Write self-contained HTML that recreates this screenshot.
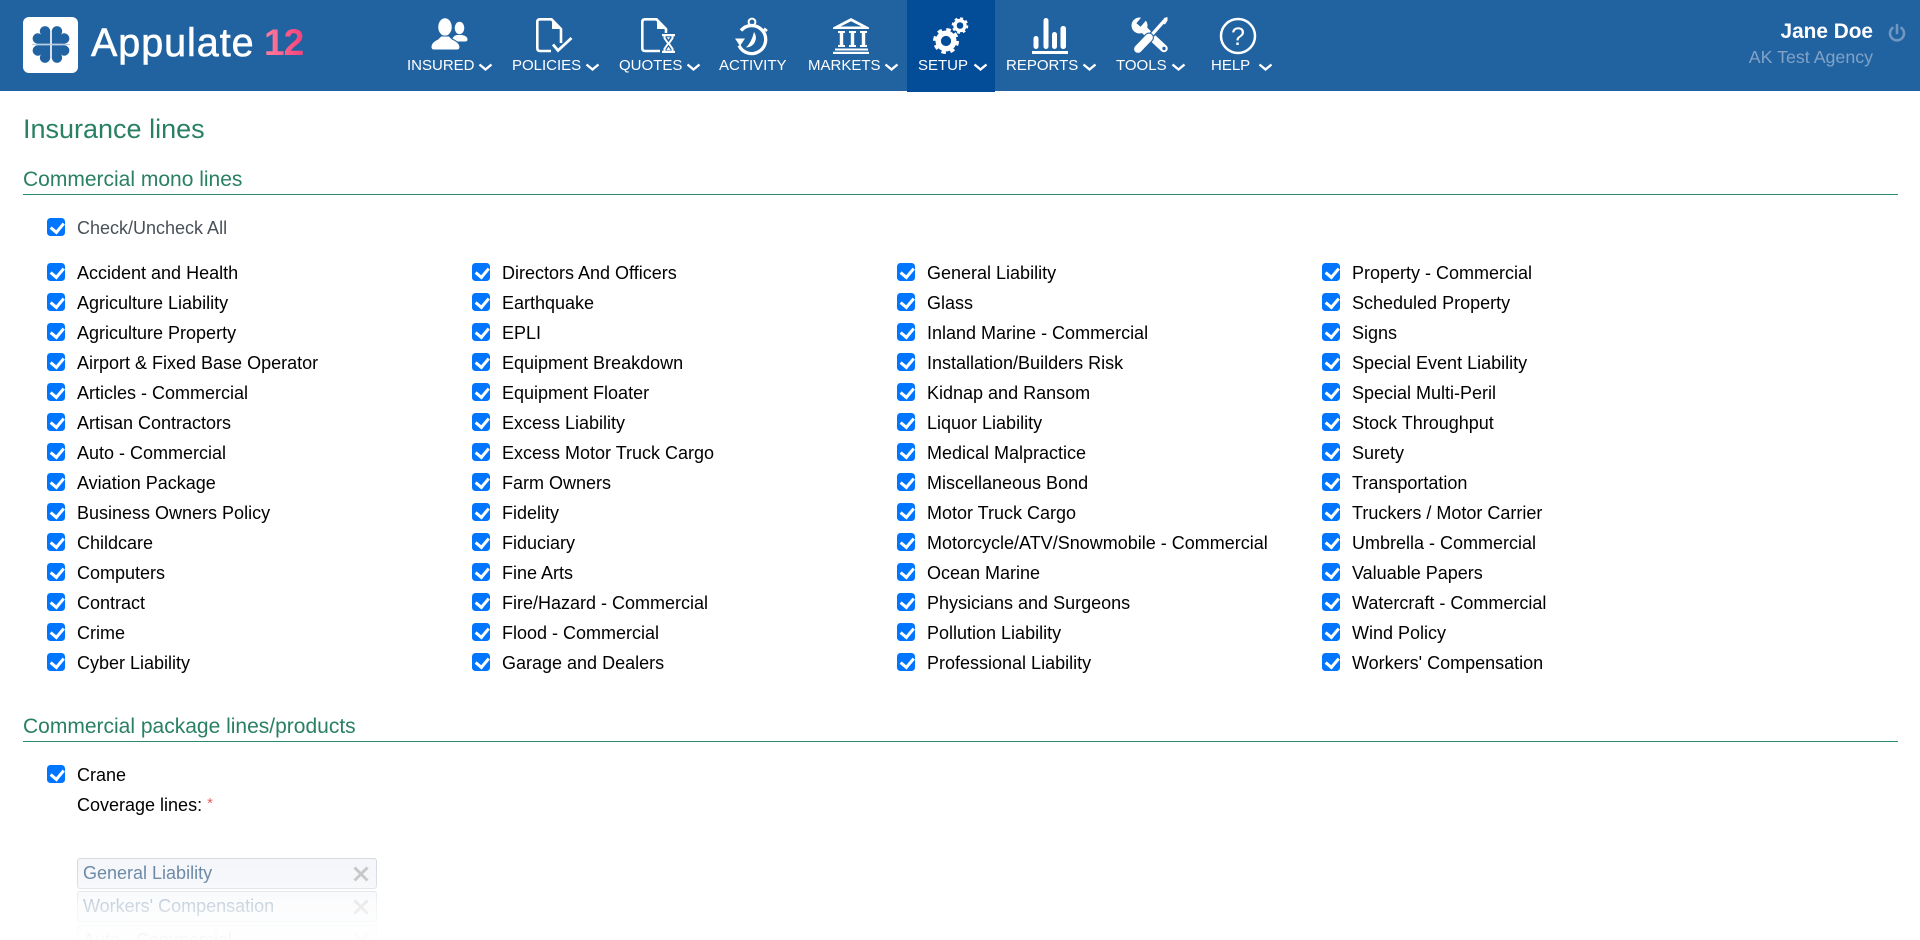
<!DOCTYPE html>
<html lang="en"><head><meta charset="utf-8"><title>Insurance lines</title>
<style>
*{box-sizing:border-box}
html,body{margin:0;padding:0;width:1920px;height:940px;overflow:hidden;background:#fff;font-family:"Liberation Sans",Arial,sans-serif;color:#000}
#w{position:relative;width:1920px;height:940px;overflow:hidden}
.hd{position:absolute;left:0;top:0;width:1920px;height:91px;background:#2163a1}
.act{position:absolute;left:907px;top:0;width:88px;height:92px;background:#034c98}
.ic{position:absolute;left:0;top:0;width:1920px;height:92px}
.nl{position:absolute;top:57px;font-size:15px;line-height:18px;color:#fff;white-space:nowrap}
.brand{position:absolute;left:91px;top:21px;font-size:39.5px;line-height:44px;color:#fff;letter-spacing:.95px;-webkit-text-stroke:.6px #fff;white-space:nowrap}
.n12{position:absolute;left:264px;top:21px;font-size:37px;line-height:44px;font-weight:bold;letter-spacing:-1px;background:linear-gradient(90deg,#ff7f9d,#f6437a);-webkit-background-clip:text;background-clip:text;color:transparent}
.u1{position:absolute;right:47px;top:20px;font-size:20.8px;line-height:24px;font-weight:bold;color:#fff;white-space:nowrap}
.u2{position:absolute;right:47px;top:46px;font-size:17.8px;line-height:22px;color:#82a3c7;white-space:nowrap}
h1{position:absolute;left:23px;top:112px;margin:0;font-size:27px;line-height:34px;font-weight:normal;color:#2a8064}
h2{position:absolute;left:23px;margin:0;width:1875px;font-size:21px;line-height:26px;font-weight:normal;color:#2a8064;border-bottom:1.5px solid #2a8a6c;height:28px}
.cb{position:absolute;display:block;height:30px;line-height:32px;font-size:18px;white-space:nowrap;padding-left:30px}
.cb input{position:absolute;left:0;top:6px;width:18px;height:18px;margin:0;appearance:none;-webkit-appearance:none;background:#0075ff;border-radius:3.5px}
.cb input::after{content:"";position:absolute;left:5.6px;top:2px;width:5.5px;height:9.5px;border:solid #fff;border-width:0 3px 3px 0;transform:rotate(40deg)}
.col{position:absolute;top:257px;width:420px}
.col .cb{position:relative}
.tag{position:absolute;left:77px;width:300px;height:31px;border:1px solid #d5d9e0;border-radius:3px;background:#f4f6f9;color:#5f7f9f;font-size:18px;line-height:29px;padding-left:5px;white-space:nowrap;overflow:hidden}
.x{position:absolute;right:7px;top:7px;width:16px;height:16px}
.fade{position:absolute;left:70px;top:855px;width:320px;height:85px;background:linear-gradient(180deg,rgba(255,255,255,0) 0,rgba(255,255,255,.12) 30%,rgba(255,255,255,.65) 55%,rgba(255,255,255,.97) 100%)}
</style></head><body><div id="w">
<div class="hd"></div><div class="act"></div>

<svg class="ic" viewBox="0 0 1920 92" fill="#fff">
<!-- logo -->
<rect x="23" y="17" width="55" height="56" rx="6"/>
<g fill="#2163a1" transform="translate(51 44.5)">
<g><circle cx="-6" cy="-13.200" r="5.200"/><circle cx="-13.200" cy="-6" r="5.200"/><path d="M-.8-.8V-13.200L-9.700-9.700-13.200-.8Z"/></g>
<g transform="scale(-1 1)"><circle cx="-6" cy="-13.200" r="5.200"/><circle cx="-13.200" cy="-6" r="5.200"/><path d="M-.8-.8V-13.200L-9.700-9.700-13.200-.8Z"/></g>
<g transform="scale(1 -1)"><circle cx="-6" cy="-13.200" r="5.200"/><circle cx="-13.200" cy="-6" r="5.200"/><path d="M-.8-.8V-13.200L-9.700-9.700-13.200-.8Z"/></g>
<g transform="scale(-1 -1)"><circle cx="-6" cy="-13.200" r="5.200"/><circle cx="-13.200" cy="-6" r="5.200"/><path d="M-.8-.8V-13.200L-9.700-9.700-13.200-.8Z"/></g>
</g>
<rect x="32" y="43.900" width="38" height="1.200" fill="#b9cde0"/>
<!-- insured -->
<ellipse cx="459.500" cy="28" rx="4.800" ry="6.200"/>
<path d="M452 41.500Q452 36 457 35H462Q467.500 36 467.500 39.500Q467.500 41.500 465 41.500Z"/>
<ellipse cx="445" cy="27" rx="7.500" ry="9.500" stroke="#2163a1" stroke-width="1.500"/>
<path d="M431 47Q431 42 438 39L441 36H449L452 39Q459.500 42 460 47Q460 50 457 50H434Q431 50 431 47Z" stroke="#2163a1" stroke-width="1"/>
<!-- policies -->
<g fill="none" stroke="#fff" stroke-width="2.600">
<path d="M551 51H540Q537.300 51 537.300 48V22Q537.300 19.300 540 19.300H551.500L561 29V43"/>
<path d="M553 44.500L558 50.500L571.500 38" stroke-width="2.800"/>
</g>
<path d="M552 20V29H560.500Z"/>
<!-- quotes -->
<g fill="none" stroke="#fff" stroke-width="2.600">
<path d="M660 51H645Q642.300 51 642.300 48V22Q642.300 19.300 645 19.300H656.500L666 29V33"/>
</g>
<path d="M657 20V29H665.500Z"/>
<path d="M662 34H675V36.200H673.500V38.500L670 43.500L673.500 48.500V50.800H675V53H662V50.800H663.500V48.500L667 43.500L663.500 38.500V36.200H662Z"/>
<path d="M665.500 36.200H671.500V38L668.500 42.200 665.500 38ZM668.500 44.800L671.500 49V50.800H665.500V49Z" fill="#2163a1"/>
<path d="M666.800 37.200H670.200L668.500 39.600ZM668.500 46.800L670.800 50.300H666.200Z"/>
<!-- activity -->
<g fill="none" stroke="#fff">
<path d="M741 30.500A14 14 0 1 1 739 45.500" stroke-width="3.300"/>
<circle cx="752" cy="22" r="3.400" stroke-width="2"/>
<path d="M764 28.500L767 31" stroke-width="2.500"/>
</g>
<path d="M735 38.500H745L740 46Z"/>
<path d="M754 32A9.700 9.700 0 0 1 746 47.500Q751.500 42.500 754 32Z"/>
<!-- markets -->
<path d="M851 18L869 27.500V29H833V27.500ZM851 21.200L840.500 26.500H861.500Z" fill-rule="evenodd"/>
<g>
<path d="M838 31H845V33H843.200V45H845V47H838V45H839.800V33H838Z"/>
<path d="M849 31H856V33H854.200V45H856V47H849V45H850.800V33H849Z"/>
<path d="M860 31H867V33H865.200V45H867V47H860V45H861.800V33H860Z"/>
</g>
<rect x="835" y="48.500" width="33" height="2"/>
<rect x="833" y="51.800" width="36" height="2.200"/>
<!-- setup -->
<g fill="none" stroke="#fff">
<circle cx="946" cy="41" r="7.800" stroke-width="5.400"/>
<circle cx="946" cy="41" r="11" stroke-width="4" stroke-dasharray="4.300 4.339"/>
<circle cx="960" cy="25.500" r="5" stroke-width="3.400"/>
<circle cx="960" cy="25.500" r="7" stroke-width="2.600" stroke-dasharray="2.700 2.798"/>
</g>
<!-- reports -->
<rect x="1033.500" y="36" width="5" height="13" rx="2.500"/>
<rect x="1043.500" y="18" width="5" height="31" rx="2.500"/>
<rect x="1052" y="32" width="5" height="17" rx="2.500"/>
<rect x="1060.500" y="26" width="5.500" height="23" rx="2.500"/>
<rect x="1032" y="51" width="36" height="3"/>
<!-- tools -->
<path d="M1164 48.500L1142 28" stroke="#fff" stroke-width="7.500" stroke-linecap="round"/>
<circle cx="1164" cy="48.500" r="1.700" fill="#2163a1"/>
<circle cx="1139.500" cy="25.500" r="8"/>
<path d="M1138.500 25L1147 15" stroke="#2163a1" stroke-width="5.500"/>
<path d="M1152 34.500L1165 20" stroke="#2163a1" stroke-width="6"/>
<path d="M1152 34.500L1164.500 20.500" stroke="#fff" stroke-width="3.200"/>
<path d="M1162.500 23L1164 18 1167.500 17 1167.500 20.500 1165 24.500Z"/>
<path d="M1138 49L1149 37.500" stroke="#2163a1" stroke-width="10" stroke-linecap="round"/>
<path d="M1138 49L1149 37.500" stroke="#fff" stroke-width="7.800" stroke-linecap="round"/>
<!-- help -->
<circle cx="1238" cy="36" r="17" fill="none" stroke="#fff" stroke-width="2.500"/>
<text x="1238" y="45" text-anchor="middle" font-size="25" font-family="Liberation Sans,sans-serif" fill="#fff">?</text>
<!-- chevrons -->
<g fill="none" stroke="#fff" stroke-width="2.400">
<path d="M479.500 64.500L485.500 69.500L491.500 64.500"/>
<path d="M586.500 64.500L592.500 69.500L598.500 64.500"/>
<path d="M687.500 64.500L693.500 69.500L699.500 64.500"/>
<path d="M885.500 64.500L891.500 69.500L897.500 64.500"/>
<path d="M974.500 64.500L980.500 69.500L986.500 64.500"/>
<path d="M1083.500 64.500L1089.500 69.500L1095.500 64.500"/>
<path d="M1172.500 64.500L1178.500 69.500L1184.500 64.500"/>
<path d="M1259.500 64.500L1265.500 69.500L1271.500 64.500"/>
</g>
<!-- power -->
<g fill="none" stroke="#6f97c2" stroke-width="2.600" stroke-linecap="round">
<path d="M1897 25V33"/><path d="M1892.500 28A7 7 0 1 0 1901.500 28"/>
</g>
</svg>

<div class="brand">Appulate</div><div class="n12">12</div>
<div class="nl" style="left:407px">INSURED</div>
<div class="nl" style="left:512px">POLICIES</div>
<div class="nl" style="left:619px">QUOTES</div>
<div class="nl" style="left:719px">ACTIVITY</div>
<div class="nl" style="left:808px">MARKETS</div>
<div class="nl" style="left:918px">SETUP</div>
<div class="nl" style="left:1006px">REPORTS</div>
<div class="nl" style="left:1116px">TOOLS</div>
<div class="nl" style="left:1211px">HELP</div>
<div class="u1">Jane Doe</div><div class="u2">AK Test Agency</div>

<h1>Insurance lines</h1>
<h2 style="top:167px">Commercial mono lines</h2>
<label class="cb" style="left:47px;top:212px;color:#495057"><input type="checkbox" checked>Check/Uncheck All</label>

<div class="col" style="left:47px">
<label class="cb"><input type="checkbox" checked>Accident and Health</label>
<label class="cb"><input type="checkbox" checked>Agriculture Liability</label>
<label class="cb"><input type="checkbox" checked>Agriculture Property</label>
<label class="cb"><input type="checkbox" checked>Airport &amp; Fixed Base Operator</label>
<label class="cb"><input type="checkbox" checked>Articles - Commercial</label>
<label class="cb"><input type="checkbox" checked>Artisan Contractors</label>
<label class="cb"><input type="checkbox" checked>Auto - Commercial</label>
<label class="cb"><input type="checkbox" checked>Aviation Package</label>
<label class="cb"><input type="checkbox" checked>Business Owners Policy</label>
<label class="cb"><input type="checkbox" checked>Childcare</label>
<label class="cb"><input type="checkbox" checked>Computers</label>
<label class="cb"><input type="checkbox" checked>Contract</label>
<label class="cb"><input type="checkbox" checked>Crime</label>
<label class="cb"><input type="checkbox" checked>Cyber Liability</label>
</div>
<div class="col" style="left:472px">
<label class="cb"><input type="checkbox" checked>Directors And Officers</label>
<label class="cb"><input type="checkbox" checked>Earthquake</label>
<label class="cb"><input type="checkbox" checked>EPLI</label>
<label class="cb"><input type="checkbox" checked>Equipment Breakdown</label>
<label class="cb"><input type="checkbox" checked>Equipment Floater</label>
<label class="cb"><input type="checkbox" checked>Excess Liability</label>
<label class="cb"><input type="checkbox" checked>Excess Motor Truck Cargo</label>
<label class="cb"><input type="checkbox" checked>Farm Owners</label>
<label class="cb"><input type="checkbox" checked>Fidelity</label>
<label class="cb"><input type="checkbox" checked>Fiduciary</label>
<label class="cb"><input type="checkbox" checked>Fine Arts</label>
<label class="cb"><input type="checkbox" checked>Fire/Hazard - Commercial</label>
<label class="cb"><input type="checkbox" checked>Flood - Commercial</label>
<label class="cb"><input type="checkbox" checked>Garage and Dealers</label>
</div>
<div class="col" style="left:897px">
<label class="cb"><input type="checkbox" checked>General Liability</label>
<label class="cb"><input type="checkbox" checked>Glass</label>
<label class="cb"><input type="checkbox" checked>Inland Marine - Commercial</label>
<label class="cb"><input type="checkbox" checked>Installation/Builders Risk</label>
<label class="cb"><input type="checkbox" checked>Kidnap and Ransom</label>
<label class="cb"><input type="checkbox" checked>Liquor Liability</label>
<label class="cb"><input type="checkbox" checked>Medical Malpractice</label>
<label class="cb"><input type="checkbox" checked>Miscellaneous Bond</label>
<label class="cb"><input type="checkbox" checked>Motor Truck Cargo</label>
<label class="cb"><input type="checkbox" checked>Motorcycle/ATV/Snowmobile - Commercial</label>
<label class="cb"><input type="checkbox" checked>Ocean Marine</label>
<label class="cb"><input type="checkbox" checked>Physicians and Surgeons</label>
<label class="cb"><input type="checkbox" checked>Pollution Liability</label>
<label class="cb"><input type="checkbox" checked>Professional Liability</label>
</div>
<div class="col" style="left:1322px">
<label class="cb"><input type="checkbox" checked>Property - Commercial</label>
<label class="cb"><input type="checkbox" checked>Scheduled Property</label>
<label class="cb"><input type="checkbox" checked>Signs</label>
<label class="cb"><input type="checkbox" checked>Special Event Liability</label>
<label class="cb"><input type="checkbox" checked>Special Multi-Peril</label>
<label class="cb"><input type="checkbox" checked>Stock Throughput</label>
<label class="cb"><input type="checkbox" checked>Surety</label>
<label class="cb"><input type="checkbox" checked>Transportation</label>
<label class="cb"><input type="checkbox" checked>Truckers / Motor Carrier</label>
<label class="cb"><input type="checkbox" checked>Umbrella - Commercial</label>
<label class="cb"><input type="checkbox" checked>Valuable Papers</label>
<label class="cb"><input type="checkbox" checked>Watercraft - Commercial</label>
<label class="cb"><input type="checkbox" checked>Wind Policy</label>
<label class="cb"><input type="checkbox" checked>Workers' Compensation</label>
</div>

<h2 style="top:714px">Commercial package lines/products</h2>
<label class="cb" style="left:47px;top:759px"><input type="checkbox" checked>Crane</label>
<div style="position:absolute;left:77px;top:789px;font-size:18px;line-height:30px;white-space:nowrap">Coverage lines: <span style="color:#e5636b;font-size:15px;vertical-align:3px">*</span></div>

<div class="tag" style="top:858px">General Liability<svg class="x" viewBox="0 0 16 16"><path d="M1.500 1.500L14.500 14.500M14.500 1.500L1.500 14.500" stroke="#c3c3c3" stroke-width="3"/></svg></div>
<div class="tag" style="top:891px">Workers' Compensation<svg class="x" viewBox="0 0 16 16"><path d="M1.500 1.500L14.500 14.500M14.500 1.500L1.500 14.500" stroke="#c3c3c3" stroke-width="3"/></svg></div>
<div class="tag" style="top:925px">Auto - Commercial<svg class="x" viewBox="0 0 16 16"><path d="M1.500 1.500L14.500 14.500M14.500 1.500L1.500 14.500" stroke="#c3c3c3" stroke-width="3"/></svg></div>
<div class="fade"></div>
</div></body></html>
